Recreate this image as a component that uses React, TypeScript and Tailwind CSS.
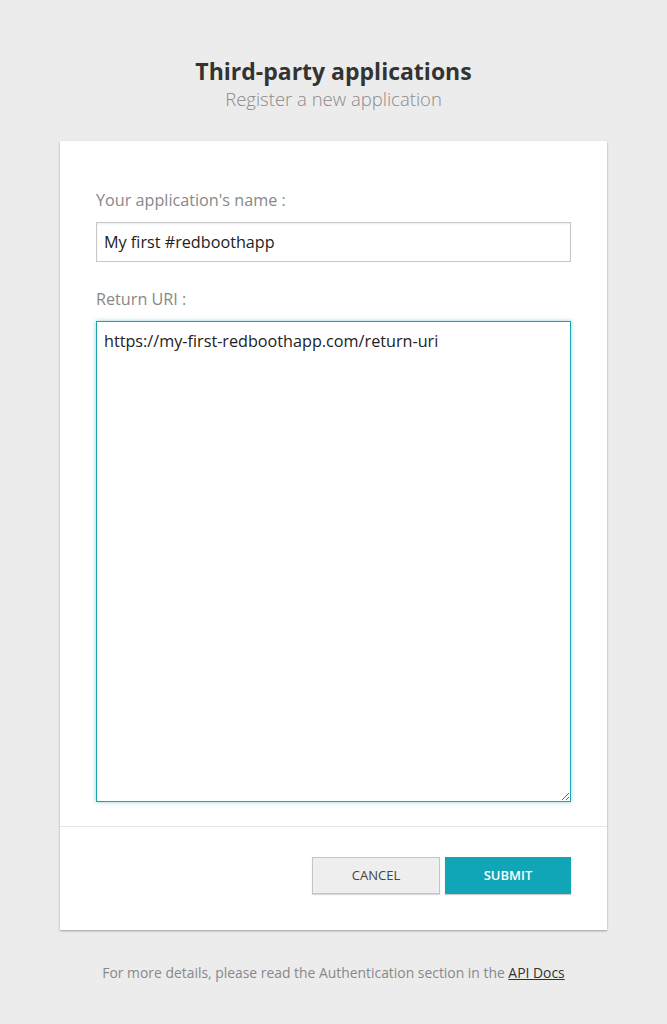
const font = { fontFamily: '"Open Sans", "Liberation Sans", sans-serif' };

const App = () => {
  return (
    <div className="min-h-[1024px] bg-[#ececec] pt-[56px] pb-10" style={font}>
      {/* Header */}
      <div className="text-center">
        <h1 className="text-[23px] leading-[30px] font-bold text-[#333]">Third-party applications</h1>
        <p className="text-[18.5px] leading-[26px] font-light text-[#8a8a8a]">Register a new application</p>
      </div>

      {/* Card */}
      <div className="mx-auto mt-[29px] w-[547px] bg-white shadow-[0_1px_2px_rgba(0,0,0,0.35)]">
        <form className="px-[36px] pt-[48px] pb-[24px]">
          <label className="block text-[16.2px] leading-[22px] text-[#888]">Your application's name :</label>
          <input
            type="text"
            defaultValue="My first #redboothapp"
            className="mt-[11px] block h-[40px] w-full border border-[#c8c8c8] px-[7px] text-[16.2px] text-[#222] shadow-[inset_0_1px_2px_rgba(0,0,0,0.08)] outline-none"
            style={font}
          />

          <label className="mt-[26px] block text-[16.2px] leading-[22px] text-[#888]">Return URI :</label>
          <textarea
            defaultValue="https://my-first-redboothapp.com/return-uri"
            className="mt-[11px] block h-[481px] w-full border border-[#1ba3b6] px-[7px] py-[8px] text-[16.2px] leading-[22px] text-[#222] shadow-[0_0_4px_rgba(27,163,182,0.5)] outline-none"
            style={font}
          />
        </form>

        <div className="border-t border-[#e6e6e6] px-[36px] pt-[30px] pb-[36px]">
          <div className="flex justify-end gap-[5px]">
            <button
              type="button"
              className="h-[37px] w-[128px] border border-[#c4c4c4] bg-[#eeeeee] text-[13px] text-[#444] shadow-[0_1px_1px_rgba(0,0,0,0.15)]"
              style={font}
            >
              CANCEL
            </button>
            <button
              type="button"
              className="h-[37px] w-[126px] bg-[#11a5b8] text-[13px] font-semibold text-white shadow-[0_1px_1px_rgba(0,0,0,0.2)]"
              style={font}
            >
              SUBMIT
            </button>
          </div>
        </div>
      </div>

      {/* Footer note */}
      <p className="mt-[33px] text-center text-[13.9px] leading-[20px] text-[#888]">
        For more details, please read the Authentication section in the{" "}
        <a href="#" className="text-[#333] underline">API Docs</a>
      </p>
    </div>
  );
};

export default App;
